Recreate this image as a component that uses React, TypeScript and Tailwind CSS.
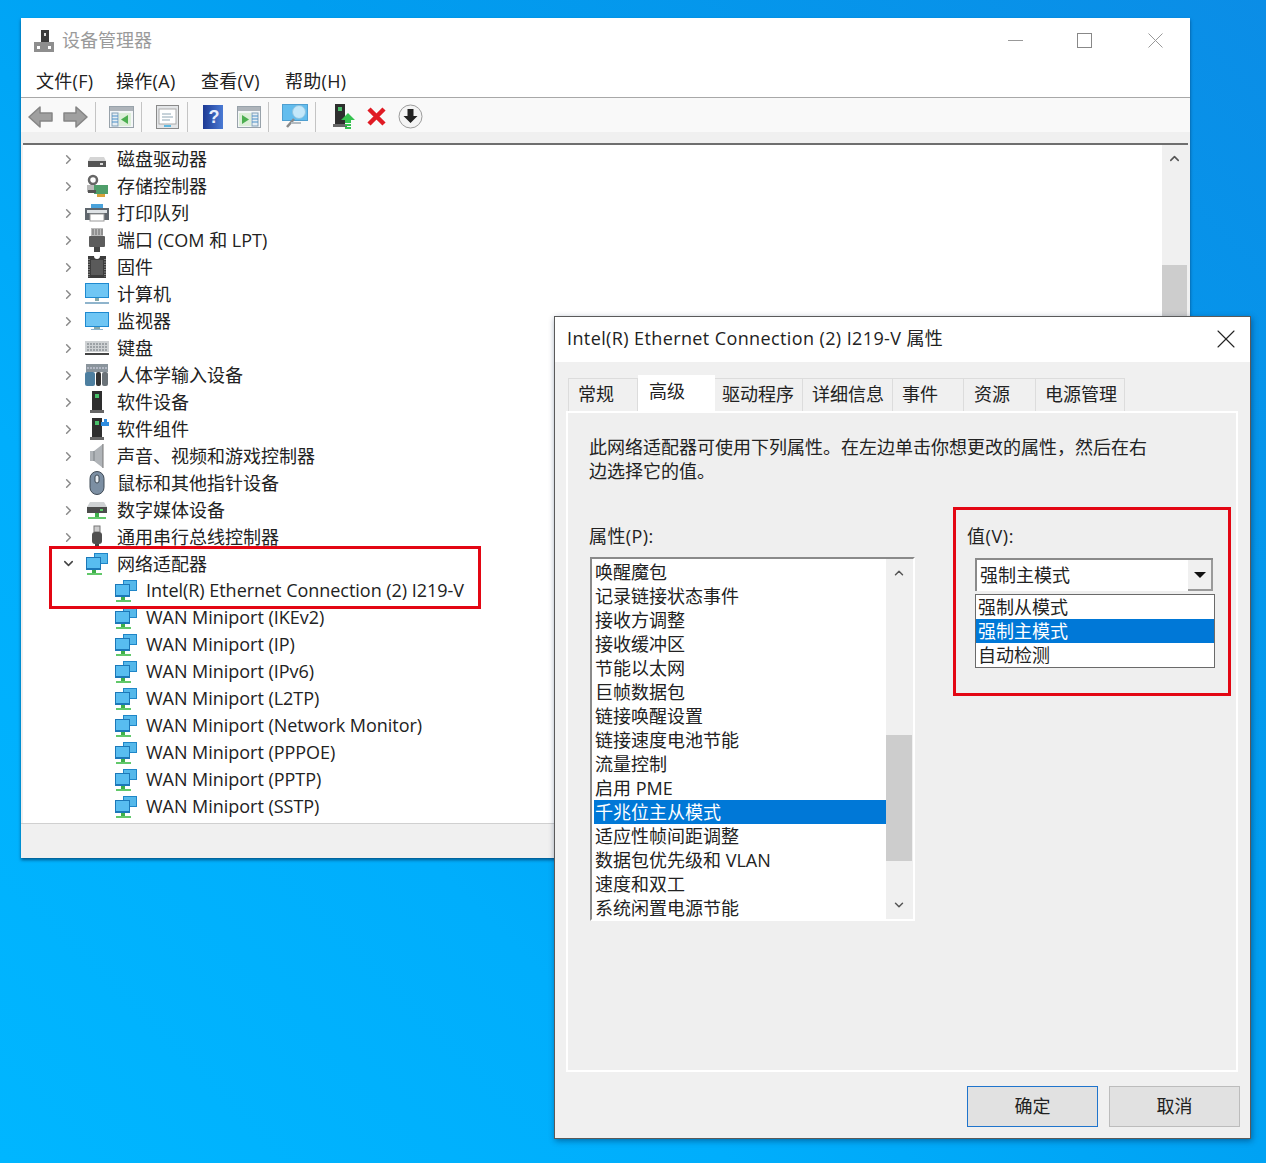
import React from 'react';
import { ChevronRight, ChevronDown, ChevronUp, X } from 'lucide-react';

const Net = () => (
  <svg width="24" height="24" viewBox="0 0 24 24">
    <rect x="9" y="1" width="14" height="11" fill="#1f86c8" />
    <rect x="10" y="2" width="12" height="9" fill="#55b8ea" />
    <rect x="1" y="5" width="15" height="13" fill="#1c78b8" />
    <rect x="2" y="6" width="13" height="10" fill="#58bdf0" />
    <rect x="7" y="18" width="4" height="3" fill="#3faf4a" />
    <rect x="2" y="21" width="15" height="2" fill="#62c86a" />
  </svg>
);

const Drive = () => (
  <svg width="24" height="24" viewBox="0 0 24 24">
    <path d="M5 10h14l2 4H3z" fill="#d5d5d5" />
    <rect x="3" y="14" width="18" height="6" fill="#555" />
    <rect x="15" y="16" width="3" height="2" fill="#ddd" />
  </svg>
);

const Storage = () => (
  <svg width="24" height="24" viewBox="0 0 24 24">
    <circle cx="8" cy="6" r="4" fill="none" stroke="#666" strokeWidth="2.5" />
    <rect x="2" y="11" width="12" height="7" fill="#bbb" />
    <rect x="9" y="11" width="14" height="9" fill="#4f9e6a" />
    <rect x="12" y="20" width="8" height="3" fill="#d9a23a" />
    <rect x="3" y="16" width="8" height="3" fill="#555" />
  </svg>
);

const Printer = () => (
  <svg width="26" height="24" viewBox="0 0 26 24">
    <rect x="7" y="3" width="12" height="6" fill="#4aa3dc" />
    <rect x="1" y="7" width="24" height="12" fill="#5f666d" />
    <rect x="3" y="9" width="20" height="3" fill="#dfe3e6" />
    <rect x="6" y="13" width="14" height="7" fill="#fff" stroke="#999" />
  </svg>
);

const Port = () => (
  <svg width="24" height="24" viewBox="0 0 24 24">
    <rect x="6" y="0" width="12" height="8" fill="#bbb" />
    <path d="M8 1v6M11 1v6M14 1v6M17 1v6" stroke="#666" />
    <rect x="4" y="8" width="16" height="11" rx="1" fill="#5c5c5c" />
    <rect x="9" y="19" width="6" height="5" fill="#444" />
  </svg>
);

const Chip = () => (
  <svg width="24" height="24" viewBox="0 0 24 24">
    <path d="M3 1h6a3 3 0 006 0h6v22H3z" fill="#3c3c3c" />
    <rect x="6" y="5" width="12" height="15" fill="#5a5a5a" />
    <path d="M4 4v18M20 4v18" stroke="#ccc" strokeDasharray="1 1.500" />
  </svg>
);

const Computer = () => (
  <svg width="26" height="24" viewBox="0 0 26 24">
    <rect x="1" y="1" width="24" height="15" fill="#1f8ad0" />
    <rect x="2" y="2" width="22" height="13" fill="#6fc6f4" />
    <rect x="11" y="16" width="4" height="3" fill="#8aa" />
    <rect x="1" y="20" width="24" height="2" fill="#8fb4cc" />
  </svg>
);

const Monitor = () => (
  <svg width="26" height="24" viewBox="0 0 26 24">
    <rect x="1" y="3" width="24" height="15" fill="#1f8ad0" />
    <rect x="2" y="4" width="22" height="13" fill="#6fc6f4" />
    <rect x="10" y="18" width="6" height="2" fill="#8aa" />
    <rect x="7" y="20" width="12" height="1" fill="#8fb4cc" />
  </svg>
);

const Keyboard = () => (
  <svg width="26" height="24" viewBox="0 0 26 24">
    <rect x="1" y="5" width="24" height="11" fill="#cfd2d4" />
    <path d="M3 8h20M3 11h20M3 14h20" stroke="#8d9297" strokeWidth="1.500" strokeDasharray="2 1" />
    <rect x="1" y="17" width="24" height="2" fill="#444" />
  </svg>
);

const Hid = () => (
  <svg width="26" height="24" viewBox="0 0 26 24">
    <rect x="2" y="1" width="22" height="8" fill="#8a949c" />
    <path d="M3 5h20" stroke="#dde" strokeDasharray="2 1" />
    <rect x="1" y="9" width="10" height="14" rx="2" fill="#4d7fa0" />
    <rect x="12" y="9" width="5" height="14" rx="2" fill="#333" />
    <rect x="18" y="9" width="6" height="14" rx="2" fill="#6a7278" />
  </svg>
);

const Tower = ({ extra }: { extra?: boolean }) => (
  <svg width="24" height="24" viewBox="0 0 24 24">
    <rect x="7" y="1" width="10" height="19" fill="#2e2e2e" />
    <rect x="10" y="4" width="4" height="4" fill="#49c06a" />
    <rect x="5" y="20" width="14" height="3" fill="#666" />
    {extra && <path d="M16 5h3V2h3v3h2v4h-8z" fill="#2f8de0" />}
  </svg>
);

const Speaker = () => (
  <svg width="24" height="26" viewBox="0 0 24 26">
    <path d="M5 8h4l9-7v24l-9-7H5z" fill="#b0b4b8" />
    <path d="M9 8v10" stroke="#7d8286" />
    <path d="M18 1v24" stroke="#777" />
  </svg>
);

const Mouse = () => (
  <svg width="24" height="24" viewBox="0 0 24 24">
    <rect x="5" y="0.500" width="14" height="23" rx="7" fill="#7c8fa3" stroke="#3f4a55" />
    <rect x="10" y="4" width="4" height="8" rx="2" fill="#e8edf2" stroke="#3f4a55" />
  </svg>
);

const Media = () => (
  <svg width="24" height="24" viewBox="0 0 24 24">
    <path d="M5 4h14l3 5H2z" fill="#cfd2d4" />
    <rect x="2" y="9" width="20" height="6" fill="#4c4c4c" />
    <rect x="15" y="11" width="3" height="2" fill="#5cd06a" />
    <rect x="10" y="15" width="4" height="4" fill="#3faf4a" />
    <rect x="3" y="19" width="18" height="2" fill="#62c86a" />
  </svg>
);

const Usb = () => (
  <svg width="24" height="24" viewBox="0 0 24 24">
    <rect x="9" y="1" width="6" height="6" fill="#ccc" stroke="#777" />
    <rect x="7" y="7" width="10" height="12" rx="3" fill="#505050" />
    <rect x="10" y="19" width="4" height="4" fill="#444" />
  </svg>
);

const rows: { label: string; icon: React.ReactNode }[] = [
  { label: '磁盘驱动器', icon: <Drive /> },
  { label: '存储控制器', icon: <Storage /> },
  { label: '打印队列', icon: <Printer /> },
  { label: '端口 (COM 和 LPT)', icon: <Port /> },
  { label: '固件', icon: <Chip /> },
  { label: '计算机', icon: <Computer /> },
  { label: '监视器', icon: <Monitor /> },
  { label: '键盘', icon: <Keyboard /> },
  { label: '人体学输入设备', icon: <Hid /> },
  { label: '软件设备', icon: <Tower /> },
  { label: '软件组件', icon: <Tower extra /> },
  { label: '声音、视频和游戏控制器', icon: <Speaker /> },
  { label: '鼠标和其他指针设备', icon: <Mouse /> },
  { label: '数字媒体设备', icon: <Media /> },
  { label: '通用串行总线控制器', icon: <Usb /> },
];

const adapters = [
  'Intel(R) Ethernet Connection (2) I219-V',
  'WAN Miniport (IKEv2)',
  'WAN Miniport (IP)',
  'WAN Miniport (IPv6)',
  'WAN Miniport (L2TP)',
  'WAN Miniport (Network Monitor)',
  'WAN Miniport (PPPOE)',
  'WAN Miniport (PPTP)',
  'WAN Miniport (SSTP)',
];

const properties = [
  '唤醒魔包',
  '记录链接状态事件',
  '接收方调整',
  '接收缓冲区',
  '节能以太网',
  '巨帧数据包',
  '链接唤醒设置',
  '链接速度电池节能',
  '流量控制',
  '启用 PME',
  '千兆位主从模式',
  '适应性帧间距调整',
  '数据包优先级和 VLAN',
  '速度和双工',
  '系统闲置电源节能',
];

const Sep = () => <div className="w-px h-[30px] bg-[#c4c4c4]" />;

const Toolbar = () => (
  <div className="h-[35px] bg-[#f9f9f9] border-t border-[#a8a8a8] flex items-center pl-[7px] pt-[3px]">
    <svg width="25" height="24" viewBox="0 0 25 24">
      <path d="M12 2L1 12l11 10v-6h12V8H12z" fill="#a0a0a0" stroke="#858585" strokeWidth="1.500" strokeLinejoin="round" />
    </svg>
    <svg className="ml-[10px]" width="25" height="24" viewBox="0 0 25 24">
      <path d="M13 2l11 10-11 10v-6H1V8h12z" fill="#a0a0a0" stroke="#858585" strokeWidth="1.500" strokeLinejoin="round" />
    </svg>
    <div className="w-[7px]" />
    <Sep />
    <svg className="ml-[13px]" width="25" height="22" viewBox="0 0 25 22">
      <rect x="0.500" y="0.500" width="24" height="21" fill="#f4f6f8" stroke="#98a2aa" />
      <rect x="1" y="1" width="23" height="4" fill="#aeb4ba" />
      <rect x="3" y="7" width="6" height="13" fill="#e6eef4" stroke="#7fa0b8" />
      <path d="M3 10h6M3 13h6M3 16h6" stroke="#4a90c8" />
      <rect x="10" y="7" width="12" height="13" fill="#dcefd8" />
      <path d="M19 9l-7 4.500 7 4.500z" fill="#4caf50" />
    </svg>
    <div className="w-[7px]" />
    <Sep />
    <svg className="ml-[14px]" width="23" height="24" viewBox="0 0 23 24">
      <rect x="0.500" y="0.500" width="22" height="23" fill="#e4e6e8" stroke="#8a8a8a" />
      <rect x="3" y="4" width="17" height="15" fill="#fff" stroke="#aaa" />
      <path d="M6 9h9M6 12h11M6 15h8" stroke="#8fa6b4" />
      <rect x="8" y="20" width="7" height="2" fill="#5fb8e0" />
    </svg>
    <div className="w-[8px]" />
    <Sep />
    <svg className="ml-[15px]" width="20" height="24" viewBox="0 0 20 24">
      <defs>
        <linearGradient id="help" x1="0" y1="0" x2="1" y2="0">
          <stop offset="0" stopColor="#1d3a94" />
          <stop offset="1" stopColor="#4a7ad4" />
        </linearGradient>
      </defs>
      <rect width="20" height="24" fill="url(#help)" />
      <text x="11" y="18" fontSize="18" fontWeight="700" fill="#e8eefc" textAnchor="middle" fontFamily="Liberation Sans">?</text>
    </svg>
    <svg className="ml-[14px]" width="24" height="22" viewBox="0 0 24 22">
      <rect x="0.500" y="0.500" width="23" height="21" fill="#f4f6f8" stroke="#98a2aa" />
      <rect x="1" y="1" width="22" height="4" fill="#aeb4ba" />
      <rect x="2" y="7" width="12" height="13" fill="#dcefd8" />
      <path d="M5 9l7 4.500-7 4.500z" fill="#4caf50" />
      <rect x="15" y="7" width="6" height="13" fill="#e6eef4" stroke="#7fa0b8" />
      <path d="M15 10h6M15 13h6M15 16h6" stroke="#4a90c8" />
    </svg>
    <div className="w-[7px]" />
    <Sep />
    <svg className="ml-[13px]" width="26" height="25" viewBox="0 0 26 25">
      <rect x="0.500" y="0.500" width="25" height="16" fill="#63bdee" stroke="#4f9fd0" />
      <circle cx="17" cy="8" r="6.500" fill="#c4e8fa" stroke="#8fc4e0" />
      <path d="M12 15L5 23" stroke="#8a8a8a" strokeWidth="2.500" />
      <rect x="9" y="18" width="10" height="2" fill="#b4bcc2" />
    </svg>
    <div className="w-[7px]" />
    <Sep />
    <svg className="ml-[17px]" width="23" height="25" viewBox="0 0 23 25">
      <rect x="2" y="0" width="10" height="20" fill="#2e2e2e" />
      <rect x="5" y="3" width="4" height="4" fill="#49c06a" />
      <rect x="0" y="20" width="14" height="3" fill="#666" />
      <path d="M15 9l7 7h-4v3h-6v-3H8z" fill="#35c24f" />
      <rect x="12" y="20" width="6" height="2" fill="#35c24f" />
      <rect x="12" y="23" width="6" height="2" fill="#35c24f" />
    </svg>
    <svg className="ml-[10px]" width="21" height="21" viewBox="0 0 21 21">
      <path d="M3 3l15 15M18 3L3 18" stroke="#e01b24" strokeWidth="4.500" />
    </svg>
    <svg className="ml-[11px]" width="25" height="25" viewBox="0 0 25 25">
      <circle cx="12.500" cy="12.500" r="11.500" fill="#f4f4f4" stroke="#9c9c9c" />
      <path d="M9.500 5h6v7h4l-7 7-7-7h4z" fill="#222" />
    </svg>
  </div>
);

const ManagerWindow = () => (
  <div className="absolute left-[21px] top-[18px] w-[1169px] h-[840px] flex flex-col bg-[#f0f0f0] shadow-[0_2px_3px_rgba(0,40,80,0.65)]">
    <div className="h-[47px] bg-white flex items-center pl-[13px] pb-[2px] shrink-0">
      <svg width="20" height="24" viewBox="0 0 20 24">
        <rect x="7" y="1" width="8" height="12" fill="#3a3a3a" />
        <rect x="10" y="4" width="2" height="3" fill="#ddd" />
        <rect x="0" y="13" width="20" height="10" fill="#8e8e8e" />
        <rect x="3" y="17" width="3" height="3" fill="#fff" />
        <rect x="14" y="17" width="3" height="3" fill="#fff" />
      </svg>
      <span className="ml-[8px] text-[18px] text-[#9a9a9a]">设备管理器</span>
      <div className="ml-auto flex items-center pr-[27px]">
        <svg width="15" height="15" viewBox="0 0 15 15">
          <path d="M0 7.500h15" stroke="#999" />
        </svg>
        <svg className="ml-[54px]" width="15" height="15" viewBox="0 0 15 15">
          <rect x="0.500" y="0.500" width="14" height="14" fill="none" stroke="#888" />
        </svg>
        <svg className="ml-[56px]" width="15" height="15" viewBox="0 0 15 15">
          <path d="M0.500 0.500l14 14M14.500 0.500l-14 14" stroke="#999" />
        </svg>
      </div>
    </div>
    <div className="h-[32px] bg-white flex items-center pl-[15px] text-[18px] tracking-[0.3px] text-[#222] shrink-0">
      <span className="w-[80px]">文件(F)</span>
      <span className="w-[85px]">操作(A)</span>
      <span className="w-[84px]">查看(V)</span>
      <span>帮助(H)</span>
    </div>
    <Toolbar />
    <div className="h-[11px] bg-[#f0f0f0] shrink-0" />
    <div className="mx-[2px] h-[2px] bg-[#6e6e6e] shrink-0" />
    <div className="h-[678px] flex ml-[2px] mr-[3px] shrink-0">
      <div className="flex-1 bg-white overflow-hidden">
        {rows.map((row) => (
          <div key={row.label} className="h-[27px] flex items-center">
            <ChevronRight className="ml-[38px] mt-[2px] text-[#8a8a8a]" size={15} strokeWidth={2.4} />
            <div className="ml-[5px] mr-[4px] w-[32px] flex justify-center">{row.icon}</div>
            <span className="text-[18px] text-[#222] leading-none">{row.label}</span>
          </div>
        ))}
        <div className="h-[27px] flex items-center">
          <ChevronDown className="ml-[38px] text-[#444]" size={15} strokeWidth={2.4} />
          <div className="ml-[5px] mr-[4px] w-[32px] flex justify-center"><Net /></div>
          <span className="text-[18px] text-[#222] leading-none">网络适配器</span>
        </div>
        {adapters.map((name) => (
          <div key={name} className="h-[27px] flex items-center pl-[91px]">
            <Net />
            <span className="ml-[8px] mb-[2px] text-[18px] tracking-[-0.03px] text-[#222] leading-none">{name}</span>
          </div>
        ))}
      </div>
      <div className="w-[25px] bg-[#f0f0f0] flex flex-col items-center pt-[6px]">
        <ChevronUp className="text-[#555]" size={15} strokeWidth={2.5} />
        <div className="mt-[99px] w-full h-[300px] bg-[#cdcdcd]" />
      </div>
    </div>
    <div className="flex-1 border-t border-[#d0d0d0]" />
  </div>
);

const tabs = [
  { label: '常规', w: 'w-[70px]', pad: 'pl-[9px]' },
  { label: '高级', w: 'w-[77px]', pad: 'pl-[11px]', active: true },
  { label: '驱动程序', w: 'w-[88px]', pad: 'pl-[7px]' },
  { label: '详细信息', w: 'w-[90px]', pad: 'pl-[9px]' },
  { label: '事件', w: 'w-[71px]', pad: 'pl-[9px]' },
  { label: '资源', w: 'w-[72px]', pad: 'pl-[10px]' },
  { label: '电源管理', w: 'w-[89px]', pad: 'pl-[9px]' },
];

const PropertyDialog = () => (
  <div className="absolute left-[554px] top-[316px] w-[697px] h-[823px] bg-[#f0f0f0] border border-[#5a5a5a] flex flex-col shadow-[1px_2px_6px_rgba(0,30,70,0.45)]">
    <div className="h-[45px] bg-white flex items-center pl-[12px] pr-[16px] pb-[2px] shrink-0">
      <span className="text-[18px] tracking-[0.39px] text-[#222]">Intel(R) Ethernet Connection (2) I219-V 属性</span>
      <X className="ml-auto text-[#222] -mr-[8px]" size={32} strokeWidth={0.8} />
    </div>
    <div className="h-[49px] flex items-end pl-[13px] shrink-0">
      {tabs.map((tab) =>
        tab.active ? (
          <div key={tab.label} className={`${tab.w} ${tab.pad} h-[37px] -mb-[1px] z-10 bg-white pt-[3px] text-[18px] text-[#222]`}>
            {tab.label}
          </div>
        ) : (
          <div key={tab.label} className={`${tab.w} ${tab.pad} h-[33px] pb-[2px] bg-[#f0f0f0] border-t border-r border-[#dcdcdc] first:border-l flex items-center text-[18px] text-[#222]`}>
            {tab.label}
          </div>
        ),
      )}
    </div>
    <div className="ml-[11px] mr-[12px] h-[661px] border-2 border-white bg-[#efefef] pl-[21px] pt-[22px] shrink-0">
      <p className="w-[570px] text-[18px] leading-[24px] text-[#222]">
        此网络适配器可使用下列属性。在左边单击你想更改的属性，然后在右边选择它的值。
      </p>
      <div className="mt-[41px] flex">
        <div className="w-[378px]">
          <div className="h-[24px] text-[18px] tracking-[0.4px] leading-[24px] text-[#222]">属性(P):</div>
          <div className="mt-[9px] ml-px w-[325px] h-[364px] flex border-t-2 border-l-2 border-t-[#8a8a8a] border-l-[#8a8a8a] border-r-2 border-b-2 border-r-white border-b-white">
            <div className="w-[295px] bg-white pl-[2px] pt-px overflow-hidden">
              {properties.map((item) => (
                <div
                  key={item}
                  className={
                    item === '千兆位主从模式'
                      ? 'h-[24px] pl-px text-[18px] leading-[24px] bg-[#0078d7] text-white'
                      : 'h-[24px] pl-px text-[18px] leading-[24px] text-[#222]'
                  }
                >
                  {item}
                </div>
              ))}
            </div>
            <div className="flex-1 bg-[#f0f0f0] flex flex-col items-center pr-px">
              <ChevronUp className="mt-[7px] text-[#555]" size={14} strokeWidth={2.5} />
              <div className="mt-[155px] w-[26px] h-[126px] bg-[#cdcdcd]" />
              <ChevronDown className="mt-[37px] text-[#555]" size={14} strokeWidth={2.5} />
            </div>
          </div>
        </div>
        <div className="relative">
          <div className="h-[24px] text-[18px] tracking-[0.6px] leading-[24px] text-[#222]">值(V):</div>
          <div className="mt-[10px] ml-[8px] w-[238px] h-[33px] bg-white border-t-2 border-l-2 border-t-[#8a8a8a] border-l-[#8a8a8a] flex items-center pl-[3px] text-[18px] text-[#222]">
            强制主模式
            <div className="ml-auto w-[25px] h-full bg-[#f0f0f0] border-r-2 border-b-2 border-[#9a9a9a] flex items-center justify-center">
              <div className="w-0 h-0 border-x-[6px] border-t-[6px] border-x-transparent border-t-[#111]" />
            </div>
          </div>
          <div className="absolute left-[8px] top-[70px] w-[240px] h-[74px] bg-white border border-[#6a6a6a] text-[18px] leading-[24px] text-[#222]">
            <div className="h-[24px] pl-[2px]">强制从模式</div>
            <div className="h-[24px] pl-[2px] bg-[#0078d7] text-white">强制主模式</div>
            <div className="h-[24px] pl-[2px]">自动检测</div>
          </div>
        </div>
      </div>
    </div>
    <div className="flex justify-end gap-[11px] pr-[10px] pt-[14px]">
      <div className="w-[131px] h-[41px] bg-[#e1e1e1] border border-[#1f74cc] flex items-center justify-center text-[18px] text-[#222]">确定</div>
      <div className="w-[131px] h-[41px] bg-[#e1e1e1] border border-[#bcbcbc] flex items-center justify-center text-[18px] text-[#222]">取消</div>
    </div>
  </div>
);

export default function App() {
  return (
    <div className="relative w-[1266px] h-[1163px] overflow-hidden bg-[linear-gradient(45deg,#00b6ff_0%,#00aefc_30%,#009ef0_60%,#0b8de6_100%)] font-['Open_Sans','Noto_Sans_CJK_SC',sans-serif]">
      <ManagerWindow />
      <PropertyDialog />
      {/* red callouts drawn over the screenshot */}
      <div className="absolute left-[49px] top-[546px] w-[432px] h-[63px] border-[3px] border-[#e30613]" />
      <div className="absolute left-[953px] top-[507px] w-[278px] h-[189px] border-[3px] border-[#e30613]" />
    </div>
  );
}
